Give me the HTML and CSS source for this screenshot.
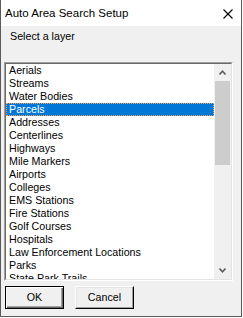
FILE: index.html
```html
<!DOCTYPE html>
<html lang="en">
<head>
    <meta charset="UTF-8">
    <title>Auto Area Search Setup</title>
    <link rel="stylesheet" href="styles.css">
</head>
<body>
    <div class="dialog">
        <div class="titlebar">
            <span class="title">Auto Area Search Setup</span>
            <svg class="close" width="10" height="10" viewBox="0 0 10 10">
                <path d="M0.5 0.5 L9.5 9.5 M9.5 0.5 L0.5 9.5" stroke="#000" stroke-width="1.1" fill="none"/>
            </svg>
        </div>
        <div class="content">
            <div class="label">Select a layer</div>
            <div class="listbox">
                <div class="listinner">
                    <ul class="items">
                        <li>Aerials</li>
                        <li>Streams</li>
                        <li>Water Bodies</li>
                        <li class="selected">Parcels</li>
                        <li>Addresses</li>
                        <li>Centerlines</li>
                        <li>Highways</li>
                        <li>Mile Markers</li>
                        <li>Airports</li>
                        <li>Colleges</li>
                        <li>EMS Stations</li>
                        <li>Fire Stations</li>
                        <li>Golf Courses</li>
                        <li>Hospitals</li>
                        <li>Law Enforcement Locations</li>
                        <li>Parks</li>
                        <li>State Park Trails</li>
                    </ul>
                    <div class="scrollbar">
                        <div class="arrow">
                            <svg width="7" height="5" viewBox="0 0 7 5"><polyline points="0.5,4.5 3.5,1.2 6.5,4.5" stroke="#606060" stroke-width="1.6" fill="none"/></svg>
                        </div>
                        <div class="track">
                            <div class="thumb"></div>
                        </div>
                        <div class="arrow">
                            <svg width="7" height="5" viewBox="0 0 7 5"><polyline points="0.5,0.5 3.5,3.8 6.5,0.5" stroke="#606060" stroke-width="1.6" fill="none"/></svg>
                        </div>
                    </div>
                </div>
            </div>
            <div class="buttons">
                <button class="btn default">OK</button>
                <button class="btn">Cancel</button>
            </div>
        </div>
    </div>
</body>
</html>
```

FILE: styles.css
```css
body {
    margin: 0;
    background: #fff;
    font-family: 'Liberation Sans', Arial, sans-serif;
    color: #000;
}
.dialog {
    box-sizing: border-box;
    width: 242px;
    height: 317px;
    border-left: 1px solid #5a5a5a;
    border-right: 1px solid #5a5a5a;
    border-bottom: 1px solid #5a5a5a;
    display: flex;
    flex-direction: column;
}
.titlebar {
    height: 26px;
    flex: none;
    background: #fff;
    display: flex;
    align-items: center;
    justify-content: space-between;
    padding: 0 8px 0 4px;
}
.title {
    font-size: 11.5px;
    line-height: 14px;
}
.close {
    display: block;
    margin-top: 1px;
}
.content {
    flex: 1;
    background: #f0f0f0;
    padding: 4px 0 0 0;
    display: flex;
    flex-direction: column;
}
.label {
    font-size: 10.7px;
    line-height: 13px;
    padding-left: 9px;
}
.listbox {
    margin: 19px 0 0 3px;
    width: 229px;
    height: 219px;
    box-sizing: border-box;
    border: 1px solid;
    border-color: #a0a0a0 #fff #fff #a0a0a0;
}
.listinner {
    height: 100%;
    box-sizing: border-box;
    border: 1px solid;
    border-color: #696969 #e3e3e3 #e3e3e3 #696969;
    background: #fff;
    display: flex;
    overflow: hidden;
}
.items {
    list-style: none;
    margin: 0;
    padding: 0;
    flex: 1;
    font-size: 10.7px;
    line-height: 13px;
    overflow: hidden;
}
.items li {
    height: 13px;
    padding-left: 3px;
    white-space: nowrap;
}
.items li.selected {
    background: #0078d7;
    color: #fff;
    outline: 1px dotted #f5a35a;
    outline-offset: -1px;
}
.scrollbar {
    width: 17px;
    flex: none;
    background: #f0f0f0;
    display: flex;
    flex-direction: column;
}
.arrow {
    height: 17px;
    flex: none;
    display: flex;
    align-items: center;
    justify-content: center;
}
.arrow svg {
    display: block;
}
.track {
    flex: 1;
    padding: 0 1px;
}
.thumb {
    height: 84px;
    background: #cdcdcd;
}
.buttons {
    display: flex;
    gap: 11px;
    margin: 5px 0 0 4px;
}
.btn {
    width: 59px;
    height: 23px;
    box-sizing: border-box;
    margin: 0;
    padding: 0;
    background: #f0f0f0;
    font-family: 'Liberation Sans', Arial, sans-serif;
    font-size: 10.7px;
    line-height: 19px;
    color: #000;
    border: 1px solid;
    border-color: #fff #000 #000 #fff;
    box-shadow: inset -1px -1px 0 #a0a0a0, inset 1px 1px 0 #e3e3e3;
}
.btn.default {
    border-color: #000;
    box-shadow: inset 1px 1px 0 #fff, inset -1px -1px 0 #696969, inset -2px -2px 0 #a0a0a0;
}
```
